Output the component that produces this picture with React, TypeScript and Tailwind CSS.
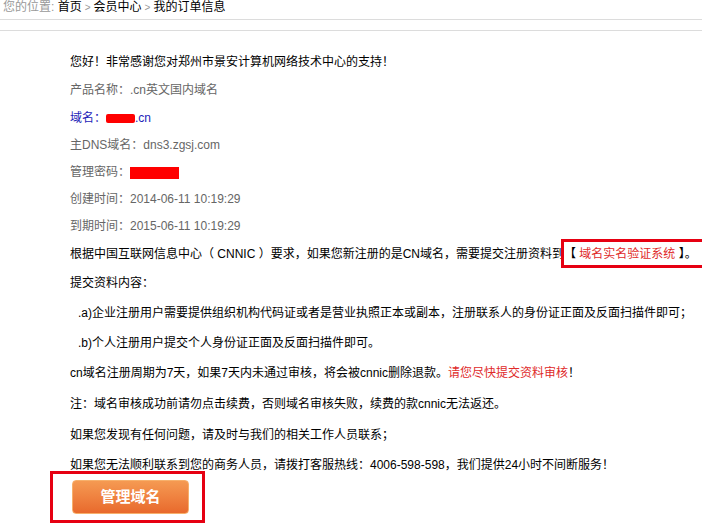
import React from "react";

const font = { fontFamily: '"Liberation Sans", Arial, "Noto Sans CJK SC", sans-serif' };

const Crumb: React.FC = () => (
	<div className="h-[19px] pl-[3px] text-[12px] leading-[15px] text-black">
		<span className="text-[#999]">您的位置: </span>
		<span>首页</span>
		<span className="text-[#999] text-[10px] px-[3px]">&gt;</span>
		<span>会员中心</span>
		<span className="text-[#999] text-[10px] px-[3px]">&gt;</span>
		<span>我的订单信息</span>
	</div>
);

const Redact: React.FC<{ w: string }> = ({ w }) => (
	<span className={`inline-block ${w} h-[9px] bg-[#ff0000] rounded-[2px] align-middle`} />
);

export default function App() {
	return (
		<div className="w-[702px] h-[523px] bg-white overflow-hidden text-[12px]" style={font}>
			<Crumb />
			<div className="border-t border-[#dcdcdc] h-[11px]" />
			<div className="border-t border-[#dcdcdc]" />

			<div className="pl-[70px] pt-[17px]">
				<p className="leading-[29px] text-black">您好！非常感谢您对郑州市景安计算机网络技术中心的支持！</p>
				<p className="leading-[27px] text-[#666]">产品名称：.cn英文国内域名</p>
				<p className="leading-[28px] text-[#2323b8]">
					域名：<Redact w="w-[29px]" />.cn
				</p>
				<p className="leading-[27px] text-[#666]">主DNS域名：dns3.zgsj.com</p>
				<p className="leading-[27px] text-[#666]">
					管理密码：<span className="inline-block w-[49px] h-[12px] bg-[#ff0000] align-middle" />
				</p>
				<p className="leading-[27px] text-[#666]">创建时间：2014-06-11 10:19:29</p>
				<p className="leading-[27px] text-[#666]">到期时间：2015-06-11 10:19:29</p>
				<p className="leading-[28px] text-black whitespace-nowrap">
					根据中国互联网信息中心（ CNNIC ）要求，如果您新注册的是CN域名，需要提交注册资料到
					<span className="relative">
						【 <span className="text-[#e02a2a]">域名实名验证系统</span> 】。
						<span className="absolute -left-[3px] -right-[10px] -top-[8px] -bottom-[7px] border-[3px] border-[#e60012]" />
					</span>
				</p>
				<p className="leading-[30px] text-black">提交资料内容：</p>
				<p className="leading-[30px] text-black pl-[8px] whitespace-nowrap">
					.a)企业注册用户需要提供组织机构代码证或者是营业执照正本或副本，注册联系人的身份证正面及反面扫描件即可；
				</p>
				<p className="leading-[30px] text-black pl-[8px]">.b)个人注册用户提交个人身份证正面及反面扫描件即可。</p>
				<p className="leading-[31px] text-black">
					cn域名注册周期为7天，如果7天内未通过审核，将会被cnnic删除退款。
					<span className="text-[#e02a2a]">请您尽快提交资料审核</span>！
				</p>
				<p className="leading-[31px] text-black">注：域名审核成功前请勿点击续费，否则域名审核失败，续费的款cnnic无法返还。</p>
				<p className="leading-[31px] text-black">如果您发现有任何问题，请及时与我们的相关工作人员联系；</p>
				<p className="leading-[28px] text-black whitespace-nowrap">
					如果您无法顺利联系到您的商务人员，请拨打客服热线：4006-598-598，我们提供24小时不间断服务！
				</p>
			</div>

			<div className="ml-[50px] -mt-[8px] w-[155px] h-[52px] border-[3px] border-[#e60012] pl-[19px] pt-[6px]">
				<button className="w-[117px] h-[34px] rounded-[4px] border border-[#f7b06b] bg-gradient-to-b from-[#f59a52] to-[#e8692c] text-white font-bold text-[15px]">
					管理域名
				</button>
			</div>
		</div>
	);
}
